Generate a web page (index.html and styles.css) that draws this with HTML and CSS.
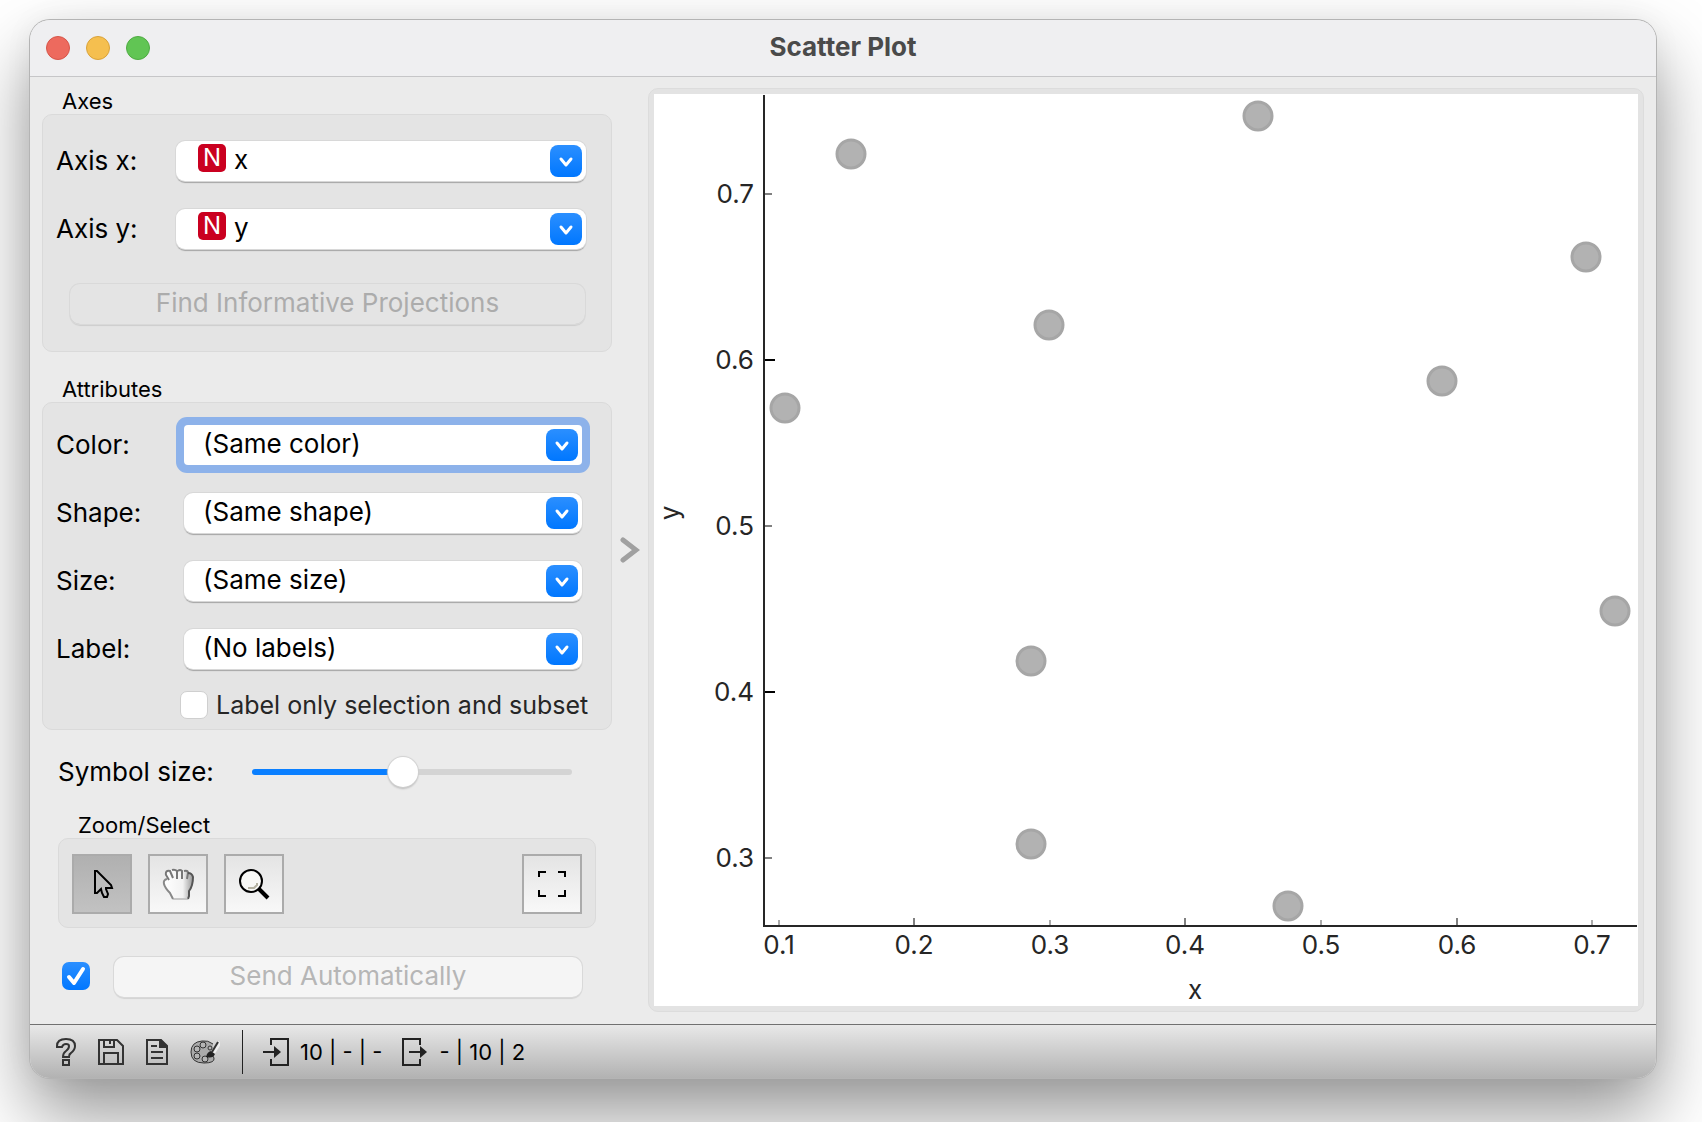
FILE: index.html
```html
<!DOCTYPE html>
<html lang="en">
<head>
<meta charset="utf-8">
<title>Scatter Plot</title>
<link rel="stylesheet" href="styles.css">
</head>
<body>
<main class="window">
  <header class="titlebar">
    <div class="lights">
      <button class="light close" aria-label="Close"></button>
      <button class="light minimize" aria-label="Minimize"></button>
      <button class="light maximize" aria-label="Zoom"></button>
    </div>
    <h1 class="title">Scatter Plot</h1>
  </header>

  <div class="content">
    <div class="controls">
      <section class="group">
        <h2 class="group-title">Axes</h2>
        <div class="box axes-box">
          <div class="row">
            <label for="axis-x">Axis x:</label>
            <div class="combo with-badge">
              <span class="badge">N</span>
              <select id="axis-x"><option>x</option></select>
              <svg class="arrow" viewBox="0 0 32 32"><path d="M11 14l5 6 5-6"/></svg>
            </div>
          </div>
          <div class="row">
            <label for="axis-y">Axis y:</label>
            <div class="combo with-badge">
              <span class="badge">N</span>
              <select id="axis-y"><option>y</option></select>
              <svg class="arrow" viewBox="0 0 32 32"><path d="M11 14l5 6 5-6"/></svg>
            </div>
          </div>
          <button class="push find" disabled>Find Informative Projections</button>
        </div>
      </section>

      <section class="group">
        <h2 class="group-title">Attributes</h2>
        <div class="box attr-box">
          <div class="row">
            <label for="color">Color:</label>
            <div class="combo focused">
              <select id="color"><option>(Same color)</option></select>
              <svg class="arrow" viewBox="0 0 32 32"><path d="M11 14l5 6 5-6"/></svg>
            </div>
          </div>
          <div class="row">
            <label for="shape">Shape:</label>
            <div class="combo">
              <select id="shape"><option>(Same shape)</option></select>
              <svg class="arrow" viewBox="0 0 32 32"><path d="M11 14l5 6 5-6"/></svg>
            </div>
          </div>
          <div class="row">
            <label for="size">Size:</label>
            <div class="combo">
              <select id="size"><option>(Same size)</option></select>
              <svg class="arrow" viewBox="0 0 32 32"><path d="M11 14l5 6 5-6"/></svg>
            </div>
          </div>
          <div class="row">
            <label for="label">Label:</label>
            <div class="combo">
              <select id="label"><option>(No labels)</option></select>
              <svg class="arrow" viewBox="0 0 32 32"><path d="M11 14l5 6 5-6"/></svg>
            </div>
          </div>
          <label class="check-row"><input type="checkbox" class="check">Label only selection and subset</label>
        </div>
      </section>

      <div class="slider-row">
        <label for="symbol-size">Symbol size:</label>
        <input id="symbol-size" class="slider" type="range" min="0" max="100" value="47">
      </div>

      <section class="group inset">
        <h2 class="group-title">Zoom/Select</h2>
        <div class="box tools">
          <button class="tool active" aria-label="Select">
            <svg width="24" height="30" viewBox="0 0 24 30"><path d="M5 2v22h2l4-4 1 4 2 4h3l1-3-2-5v-1h6l-1-3L7 2z" fill="#bdbdbd" stroke="#000" stroke-width="2"/></svg>
          </button>
          <button class="tool" aria-label="Pan">
            <svg width="32" height="32" viewBox="0 0 32 32">
              <defs><linearGradient id="hand" x1="0" y1="0" x2="1" y2="0"><stop offset="0" stop-color="#fff"/><stop offset=".65" stop-color="#f2f2f2"/><stop offset="1" stop-color="#999"/></linearGradient></defs>
              <path d="M3 4q3-3 5 0l1-2q4-2 5 1q3-3 6 0q4-2 6 2q5 0 5 5q0 9-4 14v6H11q-2-5-6-8q-4-6-3-9q1-2 3-2Q2 7 3 4z" fill="url(#hand)"/>
              <path d="M7 12L4 7q-1-5 4-4l3 7M10 2q3-1 5 1v8M16 3q2-2 4 0v8M22 3q4-1 4 2l-1 6" fill="none" stroke="#777" stroke-width="2"/>
              <path d="M5 11q-4 1-3 5t6 9l3 6" fill="none" stroke="#888" stroke-width="2"/>
              <path d="M26 5q4 0 5 4 0 9-4 14v5l-1 3" fill="none" stroke="#555" stroke-width="2"/>
              <path d="M11 31h15" stroke="#999" stroke-width="1"/>
            </svg>
          </button>
          <button class="tool" aria-label="Zoom">
            <svg width="32" height="32" viewBox="0 0 32 32"><circle cx="13" cy="13" r="11" fill="#f8f8f6" stroke="#000" stroke-width="2"/><path d="M10 20h6l3-3v-2" fill="none" stroke="#b5b2a2" stroke-width="2"/><path d="M21 21l9 9" stroke="#000" stroke-width="4"/></svg>
          </button>
          <button class="tool reset" aria-label="Reset view">
            <svg width="28" height="28" viewBox="0 0 28 28"><path d="M1 7V2h7M20 2h7v5M27 20v6h-7M8 26H1v-6" fill="none" stroke="#000" stroke-width="2"/></svg>
          </button>
        </div>
      </section>

      <div class="send-row">
        <input type="checkbox" class="check" aria-label="Send automatically" checked>
        <button class="push send" disabled>Send Automatically</button>
      </div>
    </div>

    <button class="expander" aria-label="Collapse controls">
      <svg width="20" height="28" viewBox="0 0 20 28"><path d="M3 4l13 10L3 24" fill="none" stroke="#a0a0a0" stroke-width="5" stroke-linecap="round"/></svg>
    </button>

    <section class="plot">
      <svg class="chart" viewBox="0 0 984 912" role="img" aria-label="Scatter plot of x and y">
        <g class="ticks">
          <path d="M110 100h8M110 432h8M110 764h8" stroke="#808080"/>
          <path d="M110 266h11M110 598h11" stroke="#000"/>
          <path d="M125 832v-6M396 832v-6M667 832v-6M938 832v-6" stroke="#aaa"/>
          <path d="M260 832v-8M531 832v-8M803 832v-8" stroke="#808080"/>
        </g>
        <path class="axis" d="M110 1v831h873"/>
        <g class="y-labels">
          <text x="100" y="109">0.7</text>
          <text x="100" y="275">0.6</text>
          <text x="100" y="441">0.5</text>
          <text x="100" y="607">0.4</text>
          <text x="100" y="773">0.3</text>
        </g>
        <g class="x-labels">
          <text x="125" y="860">0.1</text>
          <text x="260" y="860">0.2</text>
          <text x="396" y="860">0.3</text>
          <text x="531" y="860">0.4</text>
          <text x="667" y="860">0.5</text>
          <text x="803" y="860">0.6</text>
          <text x="938" y="860">0.7</text>
          <text x="541" y="905">x</text>
          <text transform="translate(25 419) rotate(-90)">y</text>
        </g>
        <g class="points">
          <circle cx="197" cy="60" r="14"/>
          <circle cx="604" cy="22" r="14"/>
          <circle cx="932" cy="163" r="14"/>
          <circle cx="395" cy="231" r="14"/>
          <circle cx="788" cy="287" r="14"/>
          <circle cx="131" cy="314" r="14"/>
          <circle cx="961" cy="517" r="14"/>
          <circle cx="377" cy="567" r="14"/>
          <circle cx="377" cy="750" r="14"/>
          <circle cx="634" cy="812" r="14"/>
        </g>
      </svg>
    </section>
  </div>

  <footer class="statusbar">
    <div class="actions">
      <button class="icon" aria-label="Help">
        <svg width="20" height="28" viewBox="0 0 20 28" fill="none" stroke="#333" stroke-width="2"><path d="M1 8q0-7 9-7t9 7q0 4-4 7-2 1-2 4H7q0-4 3-6 3-2 3-5 0-2-3-2T6 9H1zM7 22h6v5H7z"/></svg>
      </button>
      <button class="icon" aria-label="Save">
        <svg width="26" height="26" viewBox="0 0 26 26" fill="none" stroke="#333" stroke-width="2"><path d="M1 1h18l6 6v18H1zM6 1v7h10V1M12 1v4M6 25V14h14v11"/></svg>
      </button>
      <button class="icon" aria-label="Report">
        <svg width="22" height="26" viewBox="0 0 22 26" fill="none" stroke="#333" stroke-width="2"><path d="M1 1h14l6 6v18H1zM5 7h6M5 13h12M5 19h12"/><path d="M14 1v7h7z" fill="#333"/></svg>
      </button>
      <button class="icon" aria-label="Visual settings">
        <svg width="30" height="26" viewBox="0 0 30 26"><path d="M23 5Q18 1 12 2 1 3 1 13q0 11 13 11 11 0 10-5-1-3-3-3" fill="#aaa" stroke="#333" stroke-width="1"/><g fill="#b5b5b5" stroke="#333"><circle cx="7" cy="10" r="3"/><circle cx="13" cy="6" r="3"/><circle cx="7" cy="17" r="3"/><circle cx="15" cy="20" r="3"/><circle cx="20" cy="9" r="2"/></g><path d="M30 3l-7 11" stroke="#eee" stroke-width="4"/><path d="M28 3l-6 10" stroke="#333" stroke-width="2"/><path d="M16 18q1-5 5-6l4 3q-2 5-9 3z" fill="#222"/></svg>
      </button>
    </div>
    <div class="io">
      <svg width="26" height="28" viewBox="0 0 26 28"><path d="M8 7V1h17v26H8v-6M0 14h12" fill="none" stroke="#222" stroke-width="2"/><path d="M11 8l7 6-7 6z" fill="#222"/></svg>
      <span>10 | - | -</span>
    </div>
    <div class="io">
      <svg width="26" height="28" viewBox="0 0 26 28"><path d="M18 7V1H1v26h17v-6M7 14h12" fill="none" stroke="#222" stroke-width="2"/><path d="M18 8l7 6-7 6z" fill="#222"/></svg>
      <span>- | 10 | 2</span>
    </div>
  </footer>
</main>
</body>
</html>
```
FILE: styles.css
```css
* { box-sizing: border-box; }

body {
  margin: 0;
  padding: 20px 46px 44px 30px;
  background: #fff;
  color: #000;
  font: 26px/32px Inter, "Liberation Sans", sans-serif;
  overflow: hidden;
}

button, select, input { margin: 0; font: inherit; color: inherit; }
button { padding: 0; border: 0; background: none; }
svg { display: block; }

.window {
  display: flex;
  flex-direction: column;
  border-radius: 20px;
  background: #ebebeb;
  box-shadow: 0 0 0 1px #b4b4b4, 0 36px 72px rgba(0, 0, 0, .42), 0 0 30px rgba(0, 0, 0, .05);
  overflow: hidden;
}

.titlebar {
  display: grid;
  grid-template-columns: 1fr auto 1fr;
  align-items: center;
  height: 57px;
  padding: 0 16px;
  background: #efeff1;
  border-bottom: 1px solid #c6c6c8;
}
.lights { display: flex; gap: 16px; }
.light { width: 24px; height: 24px; border-radius: 50%; border: 1px solid; }
.close { background: #ed6a5e; border-color: #d65549; }
.minimize { background: #f5bf4f; border-color: #d9a23a; }
.maximize { background: #61c554; border-color: #4fab43; }
.title { margin: 0; padding-bottom: 2px; font-size: 26px; line-height: 32px; font-weight: 700; color: #4a4a4a; }

.content { display: flex; padding: 11px 12px 12px; }

.controls { flex: none; width: 570px; display: flex; flex-direction: column; }
.group-title { margin: 0; padding: 0 20px; font-size: 22px; line-height: 26px; font-weight: 400; }
.box { background: #e4e4e4; border: 1px solid #dadada; border-radius: 10px; }
.inset { margin: 0 16px; }

.row { display: flex; align-items: center; height: 40px; }
.row label { flex: none; }
.axes-box { display: flex; flex-direction: column; gap: 28px; height: 238px; padding: 26px 25px 26px 13px; margin-bottom: 24px; }
.axes-box label { width: 120px; }
.attr-box { display: flex; flex-direction: column; gap: 28px; height: 328px; padding: 22px 14px 8px 13px; }
.attr-box .row { margin-right: 15px; }
.attr-box .row label { width: 128px; }

.combo {
  flex: 1;
  display: flex;
  align-items: center;
  position: relative;
  height: 40px;
  border-radius: 9px;
  background: #fff;
  box-shadow: 0 0 0 1px #d8d8d8, 0 2px 1px rgba(0, 0, 0, .28);
}
.combo select {
  appearance: none;
  width: 100%;
  height: 40px;
  padding: 0 40px 2px 19px;
  border: 0;
  background: none;
  outline: 0;
}
.with-badge select { padding-left: 8px; }
.badge {
  flex: none;
  width: 28px;
  height: 28px;
  margin: 0 0 6px 22px;
  border-radius: 5px;
  background: #ca0020;
  color: #fff;
  font-size: 24px;
  line-height: 28px;
  text-align: center;
}
.arrow {
  position: absolute;
  right: 4px;
  top: 4px;
  width: 32px;
  height: 32px;
  border-radius: 8px;
  background: linear-gradient(#2b8fff, #0077ff);
  pointer-events: none;
}
.arrow path { fill: none; stroke: #fff; stroke-width: 3; stroke-linecap: round; stroke-linejoin: round; }
.focused { box-shadow: 0 0 0 8px #8db2ea; border-radius: 4px; }

.push {
  height: 40px;
  border-radius: 10px;
  text-align: center;
  box-shadow: 0 0 0 1px #d9d9d9, 0 2px 1px rgba(0, 0, 0, .1);
}
.find { margin: 7px 1px 0 14px; padding-bottom: 2px; color: #acacac; }
.send { flex: 1; padding-bottom: 2px; background: #f5f5f5; color: #b6b6b6; }

.check-row { display: flex; align-items: center; gap: 8px; margin: -8px 0 0 124px; font-size: 25px; color: #262626; white-space: nowrap; }
.check {
  appearance: none;
  flex: none;
  width: 28px;
  height: 28px;
  border-radius: 7px;
  background: #fff;
  border: 1px solid #cfcfcf;
}
.check:checked {
  border: 0;
  background: url("data:image/svg+xml,%3Csvg xmlns='http://www.w3.org/2000/svg' viewBox='0 0 28 28'%3E%3Cpath d='M7 15l5 6 9-14' fill='none' stroke='white' stroke-width='4' stroke-linecap='round' stroke-linejoin='round'/%3E%3C/svg%3E"), linear-gradient(#2b8fff, #0077ff);
}

.slider-row { display: flex; align-items: center; gap: 38px; height: 32px; margin: 26px 40px 24px 16px; white-space: nowrap; }
.slider-row label { width: 156px; }
.slider { appearance: none; flex: 1; min-width: 0; height: 30px; background: none; }
.slider::-webkit-slider-runnable-track {
  height: 6px;
  border-radius: 3px;
  background: linear-gradient(90deg, #0a7fff 47%, #d4d4d4 47%);
}
.slider::-webkit-slider-thumb {
  appearance: none;
  width: 30px;
  height: 30px;
  margin-top: -12px;
  border-radius: 50%;
  background: #fff;
  box-shadow: 0 0 1px 1px #d0d0d0, 0 2px 2px rgba(0, 0, 0, .2);
}

.tools { display: flex; gap: 16px; height: 90px; padding: 15px 13px; }
.tool {
  display: grid;
  place-items: center;
  width: 60px;
  height: 60px;
  border: 2px solid #ababab;
  background: linear-gradient(#e4e4e4, #f8f8f8);
}
.active { background: linear-gradient(#b0b0b0, #c2c2c2); }
.reset { margin-left: auto; }

.send-row { display: flex; align-items: center; gap: 24px; margin: 29px 30px 0 20px; }
.send-row .check { margin-bottom: 2px; }

.expander { flex: none; align-self: center; width: 36px; padding-left: 8px; }

.plot { flex: 1; min-width: 0; padding: 5px; background: #e3e3e3; border: 1px solid #dcdcdc; border-radius: 10px; }
.chart { width: 100%; background: #fff; }
.chart text { font-size: 26px; fill: #262626; }
.axis { fill: none; stroke: #262626; stroke-width: 2; }
.ticks { stroke-width: 2; }
.y-labels { text-anchor: end; }
.x-labels { text-anchor: middle; }
.points { fill: #b2b2b2; stroke: #a6a6a6; stroke-width: 3; }

.statusbar {
  display: flex;
  align-items: center;
  height: 54px;
  padding-left: 26px;
  border-top: 1px solid #707070;
  background: linear-gradient(#e8e8e8, #b2b2b2);
  font-size: 22px;
}
.actions { display: flex; align-items: center; gap: 22px; height: 44px; padding-right: 22px; border-right: 1px solid #222; }
.io { display: flex; align-items: center; gap: 11px; margin-left: 20px; }
```
